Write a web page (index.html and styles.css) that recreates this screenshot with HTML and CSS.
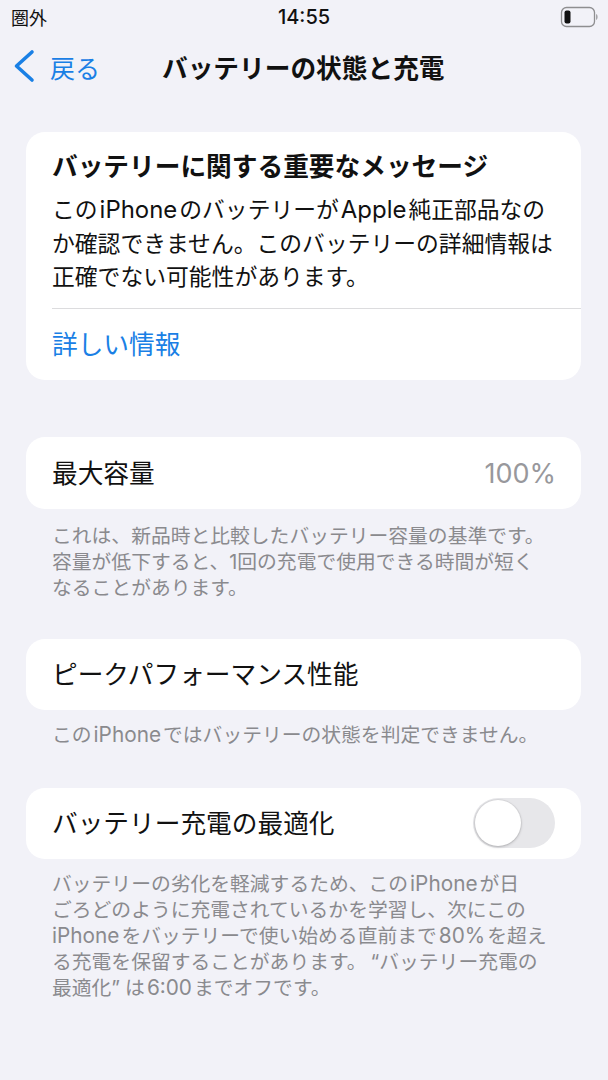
FILE: index.html
```html
<!DOCTYPE html>
<html lang="ja">
<head>
    <meta charset="UTF-8" />
    <meta name="viewport" content="width=device-width, initial-scale=1" />
    <title>バッテリーの状態と充電</title>
    <link rel="stylesheet" href="styles.css">
</head>
<body>

<div class="status-bar">
    <span class="carrier">圏外</span>
    <span class="clock">14:55</span>
    <svg class="battery" width="38" height="22" viewBox="0 0 38 22">
        <rect x="1.500" y="1.500" width="33" height="19" rx="5" fill="none" stroke="#8e8e90" stroke-width="1.300"/>
        <rect x="4.500" y="4.500" width="6" height="13" rx="2" fill="#111"/>
        <path d="M36 8c1.200.4 1.600 1.600 1.600 3s-.4 2.600-1.600 3z" fill="#a5a5a8"/>
    </svg>
</div>

<div class="nav-bar">
    <svg class="back-icon" width="22" height="34" viewBox="0 0 22 34">
        <path d="M19 3 3.500 17 19 31" fill="none" stroke="#1a80e5" stroke-width="3.600" stroke-linecap="round" stroke-linejoin="round"/>
    </svg>
    <span class="back-label">戻る</span>
    <span class="nav-title">バッテリーの状態と充電</span>
</div>

<div class="card message-card">
    <div class="message-body">
        <div class="message-title">バッテリーに関する重要なメッセージ</div>
        <p class="message-text">この<span class="latin">iPhone</span>のバッテリーが<span class="latin">Apple</span>純正部品なの<br>か確認できません。このバッテリーの詳細情報は<br>正確でない可能性があります。</p>
    </div>
    <div class="message-link">詳しい情報</div>
</div>

<div class="card row row-capacity">
    <span class="row-label">最大容量</span>
    <span class="row-value">100%</span>
</div>
<p class="caption caption-capacity">これは、新品時と比較したバッテリー容量の基準です。<br>容量が低下すると、1回の充電で使用できる時間が短く<br>なることがあります。</p>

<div class="card row row-peak">
    <span class="row-label">ピークパフォーマンス性能</span>
</div>
<p class="caption">この<span class="latin">iPhone</span>ではバッテリーの状態を判定できません。</p>

<div class="card row row-optimize">
    <span class="row-label">バッテリー充電の最適化</span>
    <div class="toggle"><div class="toggle-knob"></div></div>
</div>
<p class="caption">バッテリーの劣化を軽減するため、この<span class="latin">iPhone</span>が日<br>ごろどのように充電されているかを学習し、次にこの<br><span class="latin latin-start">iPhone</span>をバッテリーで使い始める直前まで<span class="latin">80%</span>を超え<br>る充電を保留することがあります。<span class="quote-open">“</span>バッテリー充電の<br>最適化<span class="quote-close">”</span>は<span class="latin">6:00</span>までオフです。</p>

</body>
</html>
```

FILE: styles.css
```css
html, body {
    margin: 0;
    height: 1080px;
    overflow: hidden;
}
body {
    font-family: "Inter", "Noto Sans CJK JP", sans-serif;
    background-color: #f2f2f8;
    color: #111;
}

/* ステータスバー */
.status-bar {
    display: grid;
    grid-template-columns: 1fr auto 1fr;
    align-items: center;
    height: 34px;
    padding: 0 11px;
    font-size: 18px;
}
.clock {
    font-size: 20px;
    font-weight: 500;
}
.battery {
    justify-self: end;
    margin-right: -1px;
}

/* ナビゲーション */
.nav-bar {
    display: flex;
    align-items: center;
    height: 66px;
    padding-left: 13px;
}
.back-icon {
    margin-top: -2px;
}
.back-label {
    margin-left: 15px;
    width: 112px;
    font-size: 25px;
    color: #1a80e5;
}
.nav-title {
    margin-top: -2px;
    font-size: 25.700px;
    font-weight: 700;
}

/* カード */
.card {
    margin: 0 27px 0 26px;
    background-color: #fff;
    border-radius: 19px;
    font-size: 25.700px;
}
.message-card {
    margin-top: 32px;
    height: 248px;
}
.message-body {
    height: 177px;
    margin-left: 26px;
    padding-top: 16px;
    box-sizing: border-box;
    border-bottom: 1px solid #dcdcde;
}
.message-title {
    font-weight: 700;
    line-height: 38px;
}
.message-text {
    margin: 7px 0 0;
    font-size: 22.800px;
    line-height: 33.500px;
}
.message-link {
    margin-left: 26px;
    line-height: 71px;
    color: #1a80e5;
}

/* 和文と欧文のあいだ */
.latin {
    margin: 0 2px;
    font-size: 1.050em;
    line-height: 1;
}
.latin-start {
    margin-left: 0;
}
.quote-open {
    margin-left: 4px;
}
.quote-close {
    margin-right: 5px;
}

.row {
    display: flex;
    align-items: center;
    justify-content: space-between;
    padding: 0 26px;
}
.row-label {
    margin-bottom: 4px;
}
.row-capacity {
    margin-top: 57px;
    height: 72px;
    padding-right: 25px;
}
.row-value {
    font-size: 27px;
    color: #98989c;
}
.row-peak {
    margin-top: 38px;
    height: 71px;
}
.row-optimize {
    margin-top: 40px;
    height: 71px;
}

.caption {
    margin: 12px 27px 0 52px;
    font-size: 19.800px;
    line-height: 26px;
    color: #8a8a8e;
}
.caption-capacity {
    margin-top: 14px;
}

/* トグル */
.toggle {
    width: 82px;
    height: 50px;
    margin-bottom: 2px;
    border-radius: 25px;
    background-color: #e7e7ea;
}
.toggle-knob {
    width: 46px;
    height: 46px;
    margin: 2px;
    border-radius: 50%;
    background-color: #fff;
    box-shadow: 0 1px 3px rgba(0, 0, 0, 0.22), 0 0 0 1px rgba(0, 0, 0, 0.04);
}
```
